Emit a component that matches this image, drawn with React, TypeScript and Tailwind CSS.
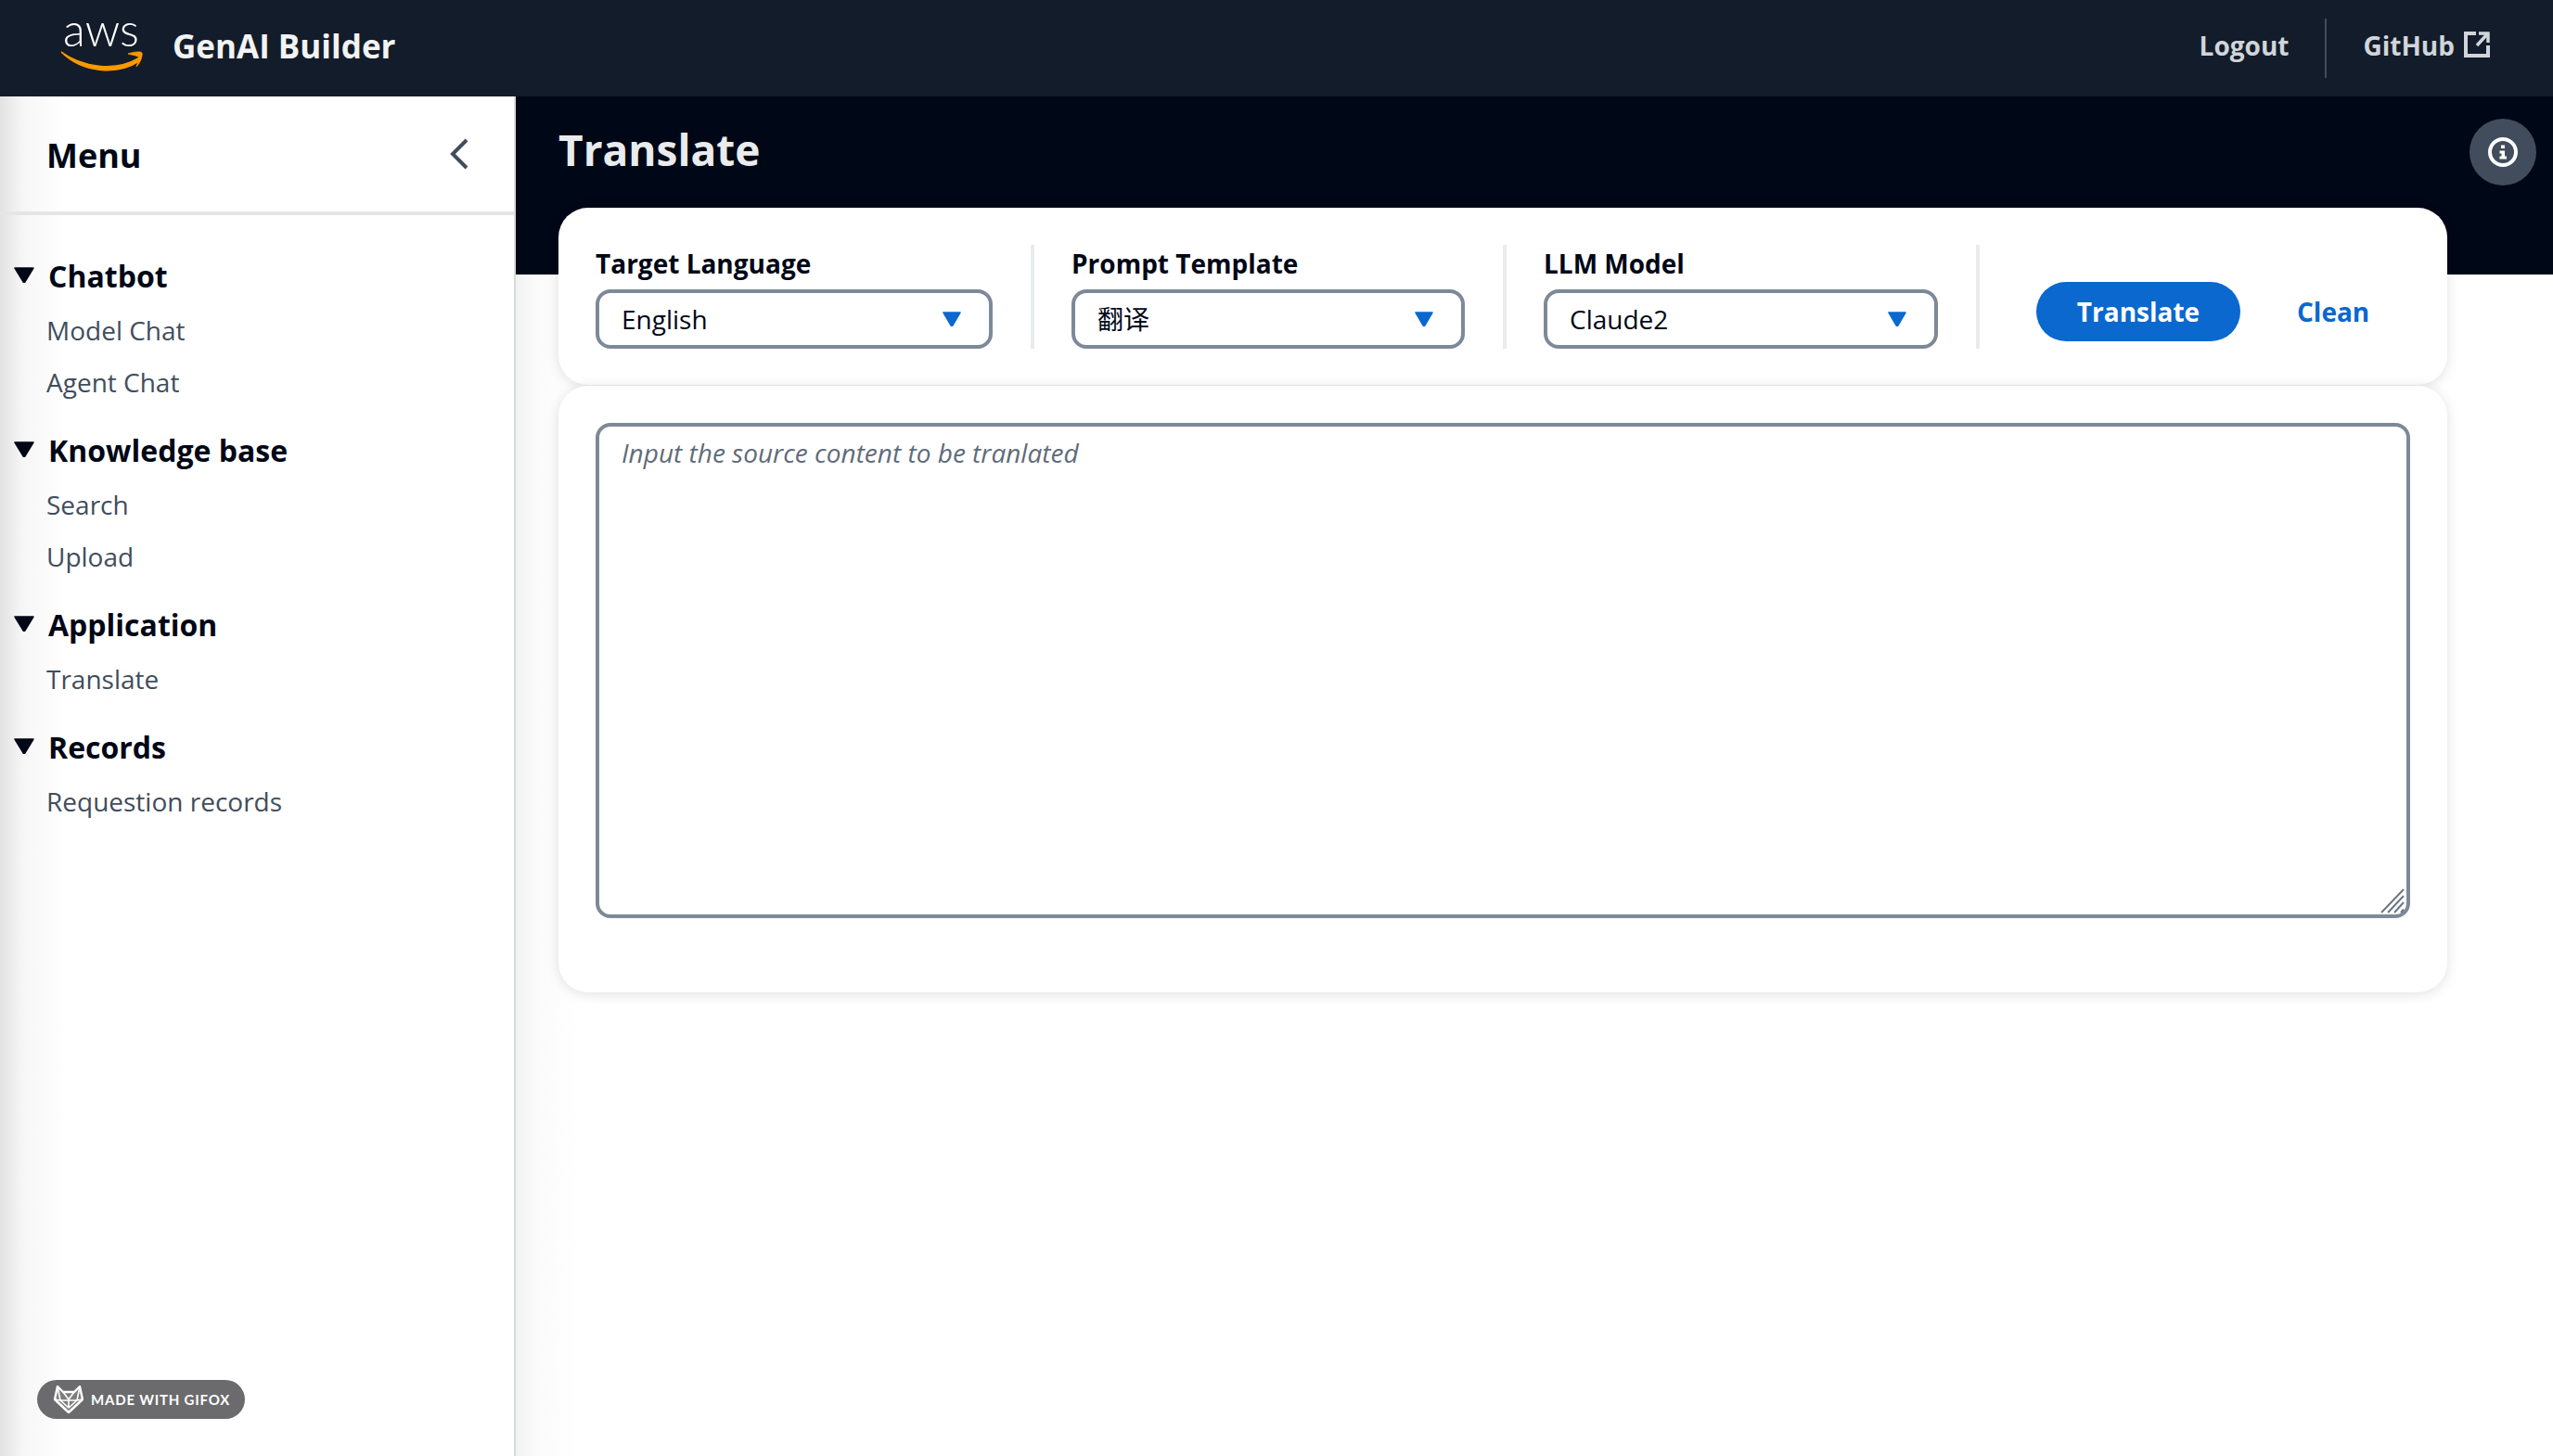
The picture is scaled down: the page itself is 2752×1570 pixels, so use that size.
const font = "font-['Open_Sans','Noto_Sans_CJK_SC',sans-serif]";

const NAV = [
	{ title: "Chatbot", links: ["Model Chat", "Agent Chat"] },
	{ title: "Knowledge base", links: ["Search", "Upload"] },
	{ title: "Application", links: ["Translate"] },
	{ title: "Records", links: ["Requestion records"] },
];

const AwsLogo = () => (
	<svg width="92" height="84" viewBox="0 -14 92 84" className="shrink-0 overflow-visible">
		<text x="4" y="26" fill="#ffffff" fontFamily="Lato" fontWeight="300" fontSize="50" textLength="82" lengthAdjust="spacingAndGlyphs">aws</text>
		<path d="M2 32 C 24 48, 60 54, 85 39 C 87 38, 88 40, 86 42 C 62 58, 24 54, 2 32 Z" fill="#ff9900" stroke="#ff9900" strokeWidth="1.5" />
		<path d="M74 34 C 80 32, 88 31, 89 33 C 90 36, 87 44, 83 48 C 85 43, 86 38, 85 37 C 83 36, 78 35, 74 34 Z" fill="#ff9900" stroke="#ff9900" strokeWidth="0.8" />
	</svg>
);

const ExternalIcon = () => (
	<svg width="28" height="28" viewBox="0 0 28 28" fill="none" stroke="#d1d5db" strokeWidth="4" className="ml-[10px]">
		<path d="M13 2 H2 V26 H26 V15" />
		<path d="M14 15 L25 3 M16 2 H26 V12" strokeWidth="3.5" />
	</svg>
);

const InfoIcon = () => (
	<svg width="32" height="32" viewBox="0 0 32 32" fill="none">
		<circle cx="16" cy="16" r="14" stroke="#ffffff" strokeWidth="4" />
		<path d="M14 8.5 H18 V12 H14 Z M12.5 14.5 H18 V20.5 H20 V23.5 H12.5 V20.5 H14.5 V17.5 H12.5 Z" fill="#ffffff" />
	</svg>
);

const FoxIcon = () => (
	<svg width="32" height="30" viewBox="0 0 32 30" fill="none" stroke="#ffffff" strokeWidth="1.6" strokeLinejoin="round" className="shrink-0">
		<path d="M4 1 L10 7 H22 L28 1 L31 15 L16 29 L1 15 Z" fill="#ffffff" fillOpacity="0.12" strokeWidth="2.4" />
		<path d="M10 7 L16 15 L22 7 M4 1 L7 16 L16 24 L25 16 L28 1 M7 16 H25 M16 15 V24 M1 15 L7 16 M31 15 L25 16" />
	</svg>
);

const Triangle = ({ color, w, h }: { color: string; w: number; h: number }) => (
	<svg width={w} height={h} viewBox="0 0 20 16" preserveAspectRatio="none" className="shrink-0">
		<path d="M1 1 H19 L10.8 15 Q10 16 9.2 15 Z" fill={color} stroke={color} strokeWidth="1.5" strokeLinejoin="round" />
	</svg>
);

const Field = ({ label, value, width }: { label: string; value: string; width: string }) => (
	<div className={`flex flex-col ${width}`}>
		<div className="h-[48px] text-[28px] leading-[41px] font-bold text-[#000716]">{label}</div>
		<div className="flex h-[64px] items-center justify-between rounded-[16px] border-[4px] border-[#7d8998] bg-white pl-[24px] pr-[30px]">
			<span className="text-[28px] leading-[40px] text-[#000716]">{value}</span>
			<Triangle color="#0a68cf" w={20} h={16} />
		</div>
	</div>
);

const Divider = () => <div className="ml-[41px] mr-[40px] h-[112px] w-[4px] shrink-0 bg-[#e9ebed]" />;

export default function App() {
	return (
		<div className={`flex h-[1570px] w-[2752px] flex-col overflow-hidden bg-white ${font}`}>
			<header className="flex h-[104px] shrink-0 items-center bg-[#131c2a] pl-[64px] pr-[68px]">
				<AwsLogo />
				<div className="ml-[30px] mt-[-4px] text-[35px] font-bold leading-[48px] text-[#f2f3f3]">GenAI Builder</div>
				<div className="ml-auto flex items-center text-[28px] font-bold text-[#d1d5db]">
					<span className="mt-[-6px]">Logout</span>
					<div className="mx-[39px] h-[64px] w-[2px] bg-[#414d5c]" />
					<span className="mt-[-6px]">GitHub</span>
					<div className="mt-[-8px]">
						<ExternalIcon />
					</div>
				</div>
			</header>

			<div className="flex min-h-0 flex-1">
				<aside className="relative flex w-[556px] shrink-0 flex-col border-r-[2px] border-[#d5dbdb] bg-[linear-gradient(to_right,#e2e2e2_0px,#f6f6f6_24px,#ffffff_70px)]">
					<div className="flex h-[128px] shrink-0 items-center justify-between border-b-[4px] border-[#e3e6e9] pl-[50px] pr-[49px]">
						<div className="mt-[3px] text-[36px] font-bold text-[#000716]">Menu</div>
						<svg width="20" height="34" viewBox="0 0 20 34" fill="none" stroke="#414d5c" strokeWidth="4">
							<path d="M18 2 L3 17 L18 32" />
						</svg>
					</div>
					<nav className="flex flex-col gap-[16px] pt-[36px]">
						{NAV.map((group) => (
							<div key={group.title}>
								<div className="flex h-[60px] items-center pl-[15px]">
									<div className="mt-[-3px]">
										<Triangle color="#000716" w={22} h={17} />
									</div>
									<span className="ml-[15px] text-[32px] font-bold text-[#000716]">{group.title}</span>
								</div>
								{group.links.map((link) => (
									<div key={link} className="flex h-[56px] items-center pl-[50px] text-[28px] text-[#414d5c]">{link}</div>
								))}
							</div>
						))}
					</nav>
					<div className="absolute bottom-[40px] left-[40px] flex h-[42px] w-[224px] items-center rounded-full bg-[#6b6b6d] pl-[18px]">
						<FoxIcon />
						<span className="ml-[8px] font-['Lato',sans-serif] text-[15px] font-bold tracking-[0.8px] text-white">MADE WITH GIFOX</span>
					</div>
				</aside>

				<main className="min-w-0 flex-1 bg-[linear-gradient(to_right,#f2f2f2_0px,#fbfbfb_24px,#ffffff_70px)]">
					<div className="flex h-[192px] items-start justify-between bg-[#000716] pl-[46px] pr-[18px] pt-[24px]">
						<h1 className="text-[46px] font-bold leading-[66px] text-[#e9ebed]">Translate</h1>
						<button className="flex h-[72px] w-[72px] items-center justify-center rounded-full bg-[#414d5c]">
							<InfoIcon />
						</button>
					</div>

					<div className="mt-[-72px] ml-[46px] w-[2036px]">
						<section className="flex h-[191px] items-start rounded-[32px] bg-white pl-[40px] pt-[40px] shadow-[0_2px_14px_rgba(0,7,22,0.12)]">
							<Field label="Target Language" value="English" width="w-[428px]" />
							<Divider />
							<Field label="Prompt Template" value="翻译" width="w-[424px]" />
							<Divider />
							<Field label="LLM Model" value="Claude2" width="w-[425px]" />
							<Divider />
							<button className="mt-[40px] ml-[21px] h-[64px] w-[220px] rounded-full bg-[#0a68cf] text-[28px] font-bold text-white">Translate</button>
							<button className="mt-[40px] ml-[61px] h-[64px] text-[28px] font-bold text-[#0a68cf]">Clean</button>
						</section>
						<section className="relative mt-[1px] h-[654px] rounded-[32px] bg-white pl-[40px] pt-[40px] shadow-[0_2px_14px_rgba(0,7,22,0.12)]">
							<div className="relative h-[534px] w-[1956px]">
								<textarea
									className="block h-full w-full resize-none rounded-[16px] border-[4px] border-[#7d8998] bg-white px-[24px] py-[8px] text-[28px] leading-[40px] text-[#000716] outline-none placeholder:italic placeholder:text-[#5f6b7a]"
									placeholder="Input the source content to be tranlated"
								/>
								<svg width="28" height="28" viewBox="0 0 28 28" fill="none" stroke="#6b7685" strokeWidth="2" className="absolute bottom-[4px] right-[4px]">
									<path d="M1 26 L25 1 M8 26 L25 8 M15 26 L25 15 M22 26 L25 22.5" />
								</svg>
							</div>
						</section>
					</div>
				</main>
			</div>
		</div>
	);
}
